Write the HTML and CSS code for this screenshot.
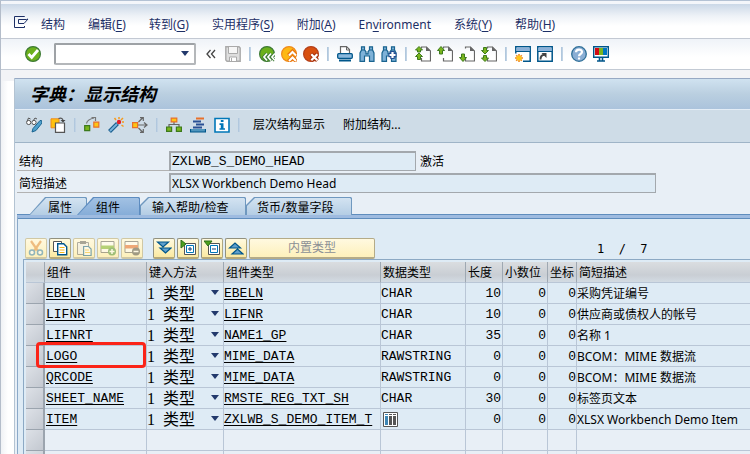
FILE: index.html
```html
<!DOCTYPE html>
<html lang="zh-CN">
<head>
<meta charset="utf-8">
<title>字典：显示结构</title>
<link rel="stylesheet" href="styles.css">
</head>
<body>
<svg class="defs" aria-hidden="true">
  <defs>
    <g id="page"><path d="M6.500 2.500V1h5l4 4v10H6.500v-3" fill="none" stroke="#666" stroke-width="1.200"/><path d="M11 .5V5h4.500z" fill="#666"/></g>
    <path id="up" d="M4 .5l3.500 4h-2v3.500h-3V4.500h-2z" fill="#7ab51d" stroke="#3c7a1c"/>
    <path id="down" d="M4 15.500l3.500-4h-2V8h-3v3.500h-2z" fill="#7ab51d" stroke="#3c7a1c"/>
    <g id="bino" stroke="#1a6490" stroke-width="1.200" fill="#7fb2d8"><path d="M2.500.8h3v3l1.500 2v2h2v-2l1.500-2v-3h3v3L15 7v8.300h-4.500V10h-5v5.300H1V7l1.500-3z"/><path d="M2.500 4h3M10.500 4h3" /></g>
    <g id="win"><path d="M.8.800h14.400v14.400H.8z" fill="#fff" stroke="#00568a" stroke-width="1.500"/><path d="M1.500 1.500h13v3.500h-13z" fill="#8ab0d8"/><path d="M1 5.500h14" stroke="#00568a"/></g>
  </defs>
</svg>
<div class="window">
  <nav class="menubar" aria-label="菜单">
    <svg class="menu-icon" width="15" height="12" viewBox="0 0 15 12"><path d="M10.500 1V.500H.5v11h10V10M4.500 3.500h8L14 3l-4 4.500H4.500z" fill="none" stroke="#1d2f66"/></svg>
    <button>结构</button>
    <button>编辑(<u>E</u>)</button>
    <button>转到(<u>G</u>)</button>
    <button>实用程序(<u>S</u>)</button>
    <button>附加(<u>A</u>)</button>
    <button>En<u>v</u>ironment</button>
    <button>系统(<u>Y</u>)</button>
    <button>帮助(<u>H</u>)</button>
  </nav>

  <div class="toolbar">
    <button class="icon" aria-label="确认"><svg viewBox="0 0 16 16"><circle cx="8" cy="8" r="7.400" fill="#6cb01c" stroke="#3d7a35" stroke-width="1.200"/><path d="M3.500 8l3.200 3.500L13 4" fill="none" stroke="#fff" stroke-width="2.800"/></svg></button>
    <span class="command"><input type="text" aria-label="命令"><i class="arrow"></i></span>
    <button class="icon chevrons" aria-label="收起"><svg viewBox="0 0 10 10"><path d="M4.500 1L1 5l3.500 4M9 1L5.500 5 9 9" fill="none" stroke="#444" stroke-width="1.300"/></svg></button>
    <button class="icon" aria-label="保存" disabled><svg viewBox="0 0 16 16"><path d="M.8.800h13.200l1.200 1.200v13.200H2L.8 14z" fill="#dedede" stroke="#aaa" stroke-width="1.400"/><path d="M3.500 1v6.500h9V1" fill="#f6f6f6" stroke="#aaa"/><path d="M4.500 15v-4h7v4M6.500 12v3" fill="#fff" stroke="#aaa"/></svg></button>
    <i class="sep"></i>
    <button class="icon" aria-label="返回"><svg viewBox="0 0 16 16"><circle cx="8" cy="8" r="7.400" fill="#6cb01c" stroke="#3d7a35" stroke-width="1.200"/><path d="M8 7.500l-3 3.500 3 3.500M12 7.500L9 11l3 3.500M16 7.500L13 11l3 3.500" fill="none" stroke="#3d7a35" stroke-width="3.400"/><path d="M8 7.500l-3 3.500 3 3.500M12 7.500L9 11l3 3.500M16 7.500L13 11l3 3.500" fill="none" stroke="#fff" stroke-width="1.700"/></svg></button>
    <button class="icon" aria-label="退出"><svg viewBox="0 0 16 16"><circle cx="8" cy="8" r="7.400" fill="#fdb813" stroke="#ef8a1d" stroke-width="1.200"/><path d="M7.500 9.500l4-4 4 4M7.500 15.500l4-4 4 4" fill="none" stroke="#e8740c" stroke-width="4"/><path d="M8 9.500l3.500-3.500L15 9.500M8 15l3.500-3.500L15 15" fill="none" stroke="#fff" stroke-width="2"/></svg></button>
    <button class="icon" aria-label="取消"><svg viewBox="0 0 16 16"><circle cx="8" cy="8" r="7.400" fill="#d8500f" stroke="#b5401a" stroke-width="1.200"/><path d="M8 8l6.500 6.500M14.500 8L8 14.500" stroke="#a8320c" stroke-width="4.200"/><path d="M8.300 8.300l6 6M14.300 8.300l-6 6" stroke="#fff" stroke-width="2.200"/></svg></button>
    <i class="sep"></i>
    <button class="icon" aria-label="打印"><svg viewBox="0 0 16 16"><path d="M3.500 7V.600h6l3 3V7" fill="#fff" stroke="#666" stroke-width="1.200"/><path d="M9.500.500v3.500h3" fill="none" stroke="#666"/><rect x=".7" y="7.700" width="14.600" height="4.600" rx="1" fill="#8ab8dc" stroke="#00568a" stroke-width="1.300"/><path d="M2 14.500h12" stroke="#00568a" stroke-width="2"/></svg></button>
    <button class="icon" aria-label="查找"><svg viewBox="0 0 16 16"><use href="#bino"/></svg></button>
    <button class="icon" aria-label="继续查找"><svg viewBox="0 0 16 16"><use href="#bino"/><path d="M11.500 5v8M7.500 9h8" stroke="#234f91" stroke-width="4.400"/><path d="M11.500 6v6M8.500 9h6" stroke="#fff" stroke-width="2.200"/></svg></button>
    <i class="sep"></i>
    <button class="icon" aria-label="首页"><svg viewBox="0 0 16 16"><use href="#page"/><path d="M4 .5l3.500 3.500h-2v2h-3v-2h-2z" fill="#7ab51d" stroke="#3c7a1c"/><path d="M4 7l3.500 3.500h-2v3h-3v-3h-2z" fill="#7ab51d" stroke="#3c7a1c"/></svg></button>
    <button class="icon" aria-label="上一页"><svg viewBox="0 0 16 16"><use href="#page"/><use href="#up"/></svg></button>
    <button class="icon" aria-label="下一页"><svg viewBox="0 0 16 16"><use href="#page"/><use href="#down"/></svg></button>
    <button class="icon" aria-label="末页"><svg viewBox="0 0 16 16"><use href="#page"/><path d="M4 8L.5 4.500h2v-3h3v3h2z" fill="#7ab51d" stroke="#3c7a1c"/><path d="M4 15.500L.5 12h2v-2.500h3V12h2z" fill="#7ab51d" stroke="#3c7a1c"/></svg></button>
    <i class="sep"></i>
    <button class="icon" aria-label="新建会话"><svg viewBox="0 0 16 16"><use href="#win"/><path d="M0 7.500h8V16H0z" fill="#fff"/><path d="M4 8v8M0 12h8M1.200 9.200l5.600 5.600M6.800 9.200l-5.600 5.600" stroke="#f08a1d" stroke-width="1.600"/><circle cx="4" cy="12" r="2.500" fill="#ffc61a"/></svg></button>
    <button class="icon" aria-label="创建快捷方式"><svg viewBox="0 0 16 16"><use href="#win"/><path d="M3.500 13.500c0-3 1-4.500 4-4.700" fill="none" stroke="#444" stroke-width="1.900"/><path d="M4.500 7h5v5z" fill="#444"/></svg></button>
    <i class="sep"></i>
    <button class="icon" aria-label="帮助"><svg viewBox="0 0 16 16"><circle cx="8" cy="8" r="7.300" fill="#8aaed4" stroke="#2f6f98" stroke-width="1.300"/><path d="M5 6.200C5 2.700 11 2.700 11 6c0 2-3 2-3 4.200" fill="none" stroke="#fff" stroke-width="2.200"/><path d="M6.900 11.500h2.200v2H6.900z" fill="#fff"/></svg></button>
    <button class="icon" aria-label="布局"><svg viewBox="0 0 16 16"><path d="M.7.700h14.600v10.600H.7z" fill="#fff" stroke="#00568a" stroke-width="1.400"/><path d="M2 2h4v7H2z" fill="#d20a11"/><path d="M6 2h4v7H6z" fill="#7ab51d"/><path d="M10 2h4v7h-4z" fill="#0077c0"/><path d="M6.500 12v2.500M9.500 12v2.500M4 15h8" stroke="#00568a" stroke-width="1.600"/></svg></button>
  </div>

  <main>
    <h1>字典：显示结构</h1>
    <div class="actions">
      <button class="icon" aria-label="显示/更改"><svg viewBox="0 0 16 16"><path d="M1 4.500L2.500 1l2 1M7 4l2-3 2 1" fill="none" stroke="#555"/><circle cx="2.700" cy="5.500" r="2.100" fill="#fff" stroke="#555"/><circle cx="8" cy="5.500" r="2.100" fill="#fff" stroke="#555"/><path d="M15.500 3.500l-1.500 0-7 8L6 15l4-1.500L16 6z" fill="#4fa0cc" stroke="#1a6490"/></svg></button>
      <button class="icon" aria-label="其他对象"><svg viewBox="0 0 16 16"><path d="M1 1.800h8v9H1z" fill="#ffc20e" stroke="#f08a1d"/><path d="M5.500 6h9v9.300h-9z" fill="#fff" stroke="#555" stroke-width="1.200"/><path d="M8.500 1.500c3-1 4.500 0 4.500 2.500" fill="none" stroke="#555" stroke-width="1.200"/><path d="M10.500 3h5L13 5.500z" fill="#444"/></svg></button>
      <i class="sep"></i>
      <button class="icon" aria-label="检查"><svg viewBox="0 0 16 16"><path d="M.7 8.700h5v5h-5z" fill="#7ab51d" stroke="#3c7a1c" stroke-width="1.200"/><path d="M9.800 5.200h5v5h-5z" fill="#fdc513" stroke="#e8702a" stroke-width="1.200"/><path d="M2.500 6.500C3 3.500 5 2 10 1M7.500.500h4V4" fill="none" stroke="#777" stroke-width="1.200"/></svg></button>
      <button class="icon" aria-label="激活"><svg viewBox="0 0 16 16"><path d="M1.500 14.500l8-8" stroke="#1a5f8f" stroke-width="4"/><path d="M2 14l7-7" stroke="#79b3dc" stroke-width="1.800"/><circle cx="11" cy="5" r="2.200" fill="#e3202a"/><path d="M6.500 1l1.500 2M11 0v2M15 1l-2 2M14 5h2M13.500 8l2 1.500" stroke="#f59a1d" stroke-width="1.500"/></svg></button>
      <button class="icon" aria-label="使用处清单"><svg viewBox="0 0 16 16"><path d="M6 8h9M6.500 5l4-4M6.500 11l4 4M12 5.500L15 8l-3 2.500M8 .700h3.300V4M8 15.300h3.300V12" fill="none" stroke="#666" stroke-width="1.200"/><path d="M.6 5.600h5v5h-5z" fill="#fdc513" stroke="#e8702a" stroke-width="1.200"/></svg></button>
      <i class="sep"></i>
      <button class="icon" aria-label="层次"><svg viewBox="0 0 16 16"><path d="M8 5v3M3 10V7.500h10V10" fill="none" stroke="#666" stroke-width="1.200"/><path d="M5.200 1.100h5.600v3.800H5.200z" fill="#fdc513" stroke="#e8702a" stroke-width="1.200"/><path d="M.6 10h5v4.400h-5zM10.400 10h5v4.400h-5z" fill="#7ab51d" stroke="#3c7a1c" stroke-width="1.200"/></svg></button>
      <button class="icon" aria-label="技术设置"><svg viewBox="0 0 16 16"><path d="M6 1.500h8" stroke="#e8702a" stroke-width="2"/><path d="M3 4.500h8M6 7.500h8M3 10.500h9" stroke="#284f94" stroke-width="1.900"/><path d="M.5 12v3h15v-3" fill="#4f95bd" stroke="#00568a" stroke-width="1.200"/></svg></button>
      <button class="icon" aria-label="文档"><svg viewBox="0 0 16 16"><path d="M1 1.500h14v13.500H1z" fill="#fff" stroke="#0077b8" stroke-width="1.600"/><path d="M6.800 3h2.700v2H6.800zM5.500 6.300h4v5H11v1.500H5.500v-1.500h1.300V8H5.500z" fill="#0077b8"/></svg></button>
      <i class="sep"></i>
      <button class="text-action">层次结构显示</button>
      <button class="text-action">附加结构...</button>
    </div>

    <form class="details">
      <div class="field"><label for="name">结构</label><input id="name" class="mono" type="text" value="ZXLWB_S_DEMO_HEAD" readonly><span class="status">激活</span></div>
      <div class="field wide"><label for="desc">简短描述</label><input id="desc" type="text" value="XLSX Workbench Demo Head" readonly></div>
    </form>

    <div class="tabs" role="tablist">
      <button class="tab first" role="tab">属性</button>
      <button class="tab active" role="tab" aria-selected="true">组件</button>
      <button class="tab short" role="tab">输入帮助/检查</button>
      <button class="tab short last" role="tab">货币/数量字段</button>
    </div>

    <section class="panel">
      <div class="table-tools">
        <button class="tool" disabled aria-label="剪切"><svg viewBox="0 0 16 16"><path d="M3 1l7 10M13 1L6 11" stroke="#e0842c" stroke-width="2.200"/><circle cx="4" cy="12.500" r="2.500" fill="#fff" stroke="#2879b0" stroke-width="1.500"/><circle cx="12" cy="12.500" r="2.500" fill="#fff" stroke="#2879b0" stroke-width="1.500"/></svg></button>
        <button class="tool" aria-label="复制"><svg viewBox="0 0 16 16"><path d="M1.500 1.500h8v10h-8z" fill="#fff" stroke="#555"/><path d="M5.700 3.700h6l3 3v8h-9z" fill="#fff" stroke="#00568a" stroke-width="1.400"/><path d="M7.500 7.500h5M7.500 10h5M7.500 12.500h5" stroke="#f5b81c"/></svg></button>
        <button class="tool" disabled aria-label="粘贴"><svg viewBox="0 0 16 16"><path d="M1.500 2.500h11v12h-11z" fill="#eee" stroke="#666"/><path d="M4 1h6v3H4z" fill="#555"/><path d="M7.600 6.500h5l2.500 2.500v6.500H7.600z" fill="#fff" stroke="#00568a" stroke-width="1.200"/><path d="M9 10h4M9 12.500h5" stroke="#f5b81c"/></svg></button>
        <button class="tool" disabled aria-label="插入行"><svg viewBox="0 0 16 16"><path d="M1 1.500h13v11H1z" fill="#fff" stroke="#555"/><path d="M1 5.500h13v3.500H1z" fill="#6fae1e"/><circle cx="12" cy="11.500" r="4" fill="#3f8a2a"/><path d="M12 9v5M9.500 11.500h5" stroke="#fff" stroke-width="1.500"/></svg></button>
        <button class="tool" disabled aria-label="删除行"><svg viewBox="0 0 16 16"><path d="M1 1.500h13v11H1z" fill="#fff" stroke="#555"/><path d="M1 5h13v3.500H1z" fill="#e05c20"/><circle cx="12" cy="11.500" r="4" fill="#444"/><path d="M9.500 11.500h5" stroke="#fff" stroke-width="1.500"/></svg></button>
        <button class="tool group" aria-label="全部展开"><svg viewBox="0 0 16 16"><path d="M1.500 2h11l-5.500 5zM4 8h11l-5.500 5z" fill="#5f9fcc" stroke="#00568a" stroke-width="1.200"/></svg></button>
        <button class="tool" aria-label="展开包含"><svg viewBox="0 0 16 16"><path d="M4.500 3.500h11v11h-11z" fill="#fff" stroke="#555"/><path d="M6.500 5.500h7v7h-7z" fill="#fff" stroke="#0077b8"/><path d="M10 7v4M8 9h4" stroke="#123c70"/><path d="M1 0l5 4-5 4z" fill="#4da01c" stroke="#2c6e1c"/></svg></button>
        <button class="tool" aria-label="折叠包含"><svg viewBox="0 0 16 16"><path d="M4.500 3.500h11v11h-11z" fill="#fff" stroke="#555"/><path d="M6.500 5.500h7v7h-7z" fill="#fff" stroke="#0077b8"/><path d="M8 9h4" stroke="#123c70"/><path d="M0 1h8L4 6z" fill="#4da01c" stroke="#2c6e1c"/></svg></button>
        <button class="tool" aria-label="全部折叠"><svg viewBox="0 0 16 16"><path d="M1.500 8h11L7 3zM4 14h11L9.500 9z" fill="#5f9fcc" stroke="#00568a" stroke-width="1.200"/></svg></button>
        <button class="tool builtin" disabled>内置类型</button>
        <output class="counter">1&nbsp; /&nbsp; 7</output>
      </div>

      <div class="grid">
        <table>
          <colgroup><col class="c-sel"><col class="c-name"><col class="c-key"><col class="c-type"><col class="c-data"><col class="c-len"><col class="c-dec"><col class="c-coord"><col></colgroup>
          <thead><tr><th></th><th>组件</th><th>键入方法</th><th>组件类型</th><th>数据类型</th><th>长度</th><th>小数位</th><th>坐标</th><th>简短描述</th></tr></thead>
          <tbody>
            <tr><th></th><td><a href="#">EBELN</a></td><td><span class="pick"><select aria-label="键入方法"><option>1&nbsp;&nbsp;类型</option></select><i class="arrow"></i></span></td><td><a href="#">EBELN</a></td><td>CHAR</td><td>10</td><td>0</td><td>0</td><td>采购凭证编号</td></tr>
            <tr><th></th><td><a href="#">LIFNR</a></td><td><span class="pick"><select aria-label="键入方法"><option>1&nbsp;&nbsp;类型</option></select><i class="arrow"></i></span></td><td><a href="#">LIFNR</a></td><td>CHAR</td><td>10</td><td>0</td><td>0</td><td>供应商或债权人的帐号</td></tr>
            <tr><th></th><td><a href="#">LIFNRT</a></td><td><span class="pick"><select aria-label="键入方法"><option>1&nbsp;&nbsp;类型</option></select><i class="arrow"></i></span></td><td><a href="#">NAME1_GP</a></td><td>CHAR</td><td>35</td><td>0</td><td>0</td><td>名称 1</td></tr>
            <tr><th></th><td class="marked"><a href="#">LOGO</a></td><td><span class="pick"><select aria-label="键入方法"><option>1&nbsp;&nbsp;类型</option></select><i class="arrow"></i></span></td><td><a href="#">MIME_DATA</a></td><td>RAWSTRING</td><td>0</td><td>0</td><td>0</td><td>BCOM：MIME 数据流</td></tr>
            <tr><th></th><td><a href="#">QRCODE</a></td><td><span class="pick"><select aria-label="键入方法"><option>1&nbsp;&nbsp;类型</option></select><i class="arrow"></i></span></td><td><a href="#">MIME_DATA</a></td><td>RAWSTRING</td><td>0</td><td>0</td><td>0</td><td>BCOM：MIME 数据流</td></tr>
            <tr><th></th><td><a href="#">SHEET_NAME</a></td><td><span class="pick"><select aria-label="键入方法"><option>1&nbsp;&nbsp;类型</option></select><i class="arrow"></i></span></td><td><a href="#">RMSTE_REG_TXT_SH</a></td><td>CHAR</td><td>30</td><td>0</td><td>0</td><td>标签页文本</td></tr>
            <tr><th></th><td><a href="#">ITEM</a></td><td><span class="pick"><select aria-label="键入方法"><option>1&nbsp;&nbsp;类型</option></select><i class="arrow"></i></span></td><td><a href="#">ZXLWB_S_DEMO_ITEM_T</a></td><td><button class="structure" type="button" aria-label="表类型"><svg viewBox="0 0 15 15"><path d="M.5.500h14v14H.5z" fill="#fff" stroke="#555"/><path d="M2 2h3v1H2zM2 4h3v9H2z" fill="#3d86b5"/><path d="M6 2h3v1H6zM6 4h3v9H6zM10 2h3v1h-3zM10 4h3v9h-3z" fill="#555"/></svg></button></td><td>0</td><td>0</td><td>0</td><td>XLSX Workbench Demo Item</td></tr>
            <tr class="empty"><th></th><td></td><td></td><td></td><td></td><td></td><td></td><td></td><td></td></tr>
            <tr class="empty"><th></th><td></td><td></td><td></td><td></td><td></td><td></td><td></td><td></td></tr>
          </tbody>
        </table>
      </div>
    </section>
  </main>
</div>
</body>
</html>
```
FILE: styles.css
```css
* { box-sizing: border-box; }

body {
  margin: 0;
  height: 100vh;
  overflow: hidden;
  background: #fff;
  color: #000;
  font: 12px/16px "Noto Sans", "Noto Sans CJK SC", sans-serif;
}

button, input, select {
  margin: 0;
  padding: 0;
  border: 0;
  border-radius: 0;
  background: none;
  color: inherit;
  font: inherit;
}

svg { display: block; }
.defs { position: absolute; width: 0; height: 0; }

.window {
  height: 100%;
  border-top: 1px solid #b4c2d4;
  border-left: 1px solid #b4bdca;
  background: linear-gradient(#f2f3f6, #f2f3f6) 0 0 / 100% 80px no-repeat, linear-gradient(90deg, #f0f2f5, #fff 7px);
}

/* Menu bar */
.menubar {
  display: flex;
  align-items: center;
  gap: 23px;
  height: 38px;
  padding: 7px 13px 0;
  border-top: 3px solid #f4f6fa;
  border-bottom: 1px solid #c3c9d3;
  background: linear-gradient(#cbd8e7, #eef2f7 12px, #fff 22px);
  color: #1d2f66;
}
.menu-icon { margin: 0 -11px 6px 0; }
.menubar button { white-space: nowrap; }
u { text-underline-offset: 2px; }

/* Standard toolbar */
.toolbar {
  display: flex;
  align-items: center;
  gap: 6px;
  height: 31px;
  padding: 0 24px;
  border-bottom: 1px solid #c3cad4;
  background: linear-gradient(#eff3f8, #fff 18px);
}
.icon { flex: none; width: 16px; height: 16px; }
.icon svg { width: 100%; height: 100%; }
.chevrons { width: 10px; height: 10px; margin: 0 3px 0 4px; }
.sep {
  flex: none;
  width: 2px;
  height: 14px;
  margin: 0 2px;
  background: linear-gradient(90deg, #a9c2da, #c8d8e8);
}
.command { position: relative; width: 142px; height: 22px; margin-left: 7px; }
.command input {
  width: 100%;
  height: 100%;
  padding: 0 20px 0 4px;
  border: 2px solid #9ea2a6;
  border-right-color: #b4b7ba;
  border-bottom-color: #b4b7ba;
  border-radius: 2px;
  background: #fff;
}
.arrow {
  position: absolute;
  top: 8px;
  right: 7px;
  border: 4px solid transparent;
  border-top: 5px solid #22396c;
  border-bottom: 0;
  pointer-events: none;
}

/* Work area */
main {
  margin: 8px 0 0 13px;
  border-left: 1px solid #b3c3d2;
  background: #e8eff6;
}
h1 {
  margin: 0;
  padding: 0 15px;
  border-top: 1px solid #97a9c4;
  border-bottom: 1px solid #e4edf6;
  background: linear-gradient(#d0e2f0, #bacfe0 50%, #abc3dc);
  font: italic bold 18px/28px "Noto Sans CJK SC", sans-serif;
  padding-bottom: 2px;
}
.actions {
  display: flex;
  align-items: center;
  gap: 8px;
  height: 33px;
  padding: 0 11px 3px;
  border-bottom: 1px solid #9fb4c7;
  background: #cedce7;
}
.actions .sep { margin: 0; }
.text-action { padding: 0 5px; white-space: nowrap; }

.details { padding: 8px 2px 0; }
.field {
  display: flex;
  align-items: center;
  width: 399px;
  height: 20px;
  margin-bottom: 2px;
}
.field.wide { width: 639px; }
.field label {
  width: 152px;
  height: 20px;
  padding: 3px 2px 0;
  border-bottom: 1px solid #b2b2b2;
}
.field input {
  flex: 1;
  min-width: 0;
  height: 20px;
  padding: 0 1px 1px;
  border: 2px solid #a3a8ad;
  border-right-width: 1px;
  border-bottom-width: 1px;
  background: #deebf5;
}
.field .mono { font: 13px/16px "Liberation Mono", monospace; }
.field .status { width: 0; padding: 1px 0 0 4px; white-space: nowrap; }
.field:first-child { width: 403px; }
.field:first-child input { flex: none; width: 247px; }

/* Tabs */
.tabs { display: flex; height: 20px; padding: 2px 0 0 14px; }
.tab {
  --cut: 16px;
  --drop: 100%;
  --edge: #6f98bf;
  --fill: linear-gradient(#d3e3f1, #b4cde4);
  position: relative;
  isolation: isolate;
  flex: none;
  height: 18px;
  width: 58px;
  padding: 3px 0 0 19px;
  text-align: left;
  line-height: 16px;
  white-space: nowrap;
}
.tab::before, .tab::after {
  content: "";
  position: absolute;
  z-index: -1;
  inset: 0;
  background: var(--edge);
  clip-path: polygon(0 100%, 0 var(--drop), var(--cut) 0, calc(100% - 1px) 0, 100% 1px, 100% 100%);
}
.tab::after { inset: 1px 1px 0; background: var(--fill); }
.tab.first { margin-right: -10px; }
.tab.active { --edge: #5d8cc0; --fill: linear-gradient(#a2c1e3, #86add8); width: 63px; }
.tab.short { --cut: 8px; --drop: 8px; width: 106px; padding-left: 12px; }
.tab.last { padding-left: 11px; }

/* Component list */
.panel {
  margin-left: 2px;
  padding: 20px 0 0 5px;
  border-top: 3px solid #9ebbe0;
  border-left: 1px solid #8ba9c9;
  box-shadow: inset 0 1px #5f8dbd, 0 -1px #5f8dbd;
  background: #deebf5;
}
.table-tools { display: flex; gap: 2px; padding-left: 2px; }
.tool {
  flex: none;
  display: grid;
  place-items: center;
  width: 22px;
  height: 21px;
  border: 1px solid #92917f;
  border-right-color: #aea77f;
  border-bottom: 2px solid #b5a878;
  border-radius: 2px;
  background: linear-gradient(#fffae0, #fbe9a1);
}
.tool svg { width: 16px; height: 16px; }
.tool:disabled { border-color: #d0c8a4; background: linear-gradient(#fff9e0, #fdf0bb); }
.tool:disabled svg { opacity: .5; }
.tool.group { margin-left: 8px; }
.tool.builtin { width: 126px; border-color: #b4ab88; color: #8b8f94; }
.counter { margin: 3px 0 0 220px; font: 12px/16px "DejaVu Sans Mono", monospace; }

.grid { padding: 2px 0 0 2px; border-top: 1px solid #8ca9c4; border-left: 1px solid #8ca9c4; }
table { width: 100%; table-layout: fixed; border-spacing: 0; }
.c-sel { width: 19px; }
.c-name { width: 102px; }
.c-key { width: 77px; }
.c-type { width: 157px; }
.c-data { width: 85px; }
.c-len { width: 37px; }
.c-dec { width: 45px; }
.c-coord { width: 29px; }

th, td {
  height: 21px;
  padding: 0;
  border-right: 1px solid #b9c6d6;
  border-bottom: 1px solid #b9c6d6;
  text-align: left;
  font-weight: normal;
  white-space: nowrap;
}
thead th {
  padding: 1px 0 0 2px;
  border-right-color: #9ea8b2;
  background: linear-gradient(#dadde0, #c9ced4 65%, #d3dbe3);
}
th:last-child, td:last-child { border-right: 0; }
tbody th {
  border: 1px solid #9ba4ae;
  border-width: 0 2px 1px 0;
  background: linear-gradient(135deg, #dde1e7, #c3c8d0);
}
td { padding-top: 1px; font: 13px/16px "Liberation Mono", "Noto Sans CJK SC", monospace; }
td:nth-child(2) { padding-left: 1px; }
td:nth-child(n+6):nth-child(-n+8) { text-align: right; }
td:nth-child(6), td:nth-child(7) { padding-right: 1px; }
td:last-child { font: 12px/16px "Noto Sans", "Noto Sans CJK SC", sans-serif; }
td a { color: inherit; text-underline-offset: 2px; }
.empty td { background: #e8eff6; }

.pick { position: relative; display: block; height: 19px; }
.pick select {
  display: block;
  width: 100%;
  height: 19px;
  appearance: none;
  font: 16px/19px "Liberation Serif", "Noto Sans CJK SC", serif;
}
.pick .arrow { top: 6px; right: 4px; }
.structure { display: block; width: 15px; height: 15px; margin-left: 2px; }

.marked { position: relative; }
.marked::after {
  content: "";
  position: absolute;
  inset: -4px 0 -2px -9px;
  border: 3px solid #fb2418;
  border-radius: 4px;
  pointer-events: none;
}
```
